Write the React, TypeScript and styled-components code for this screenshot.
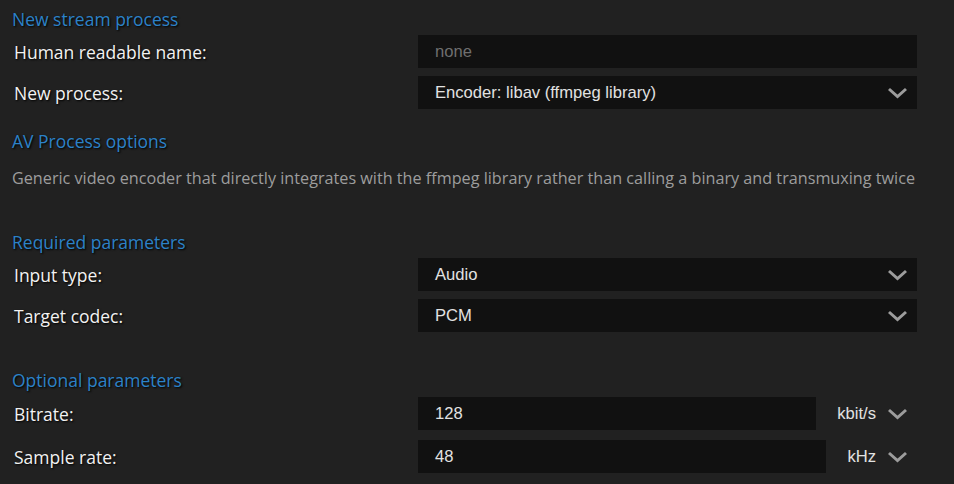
import styled, { createGlobalStyle } from 'styled-components';

const GlobalStyle = createGlobalStyle`
  html, body {
    margin: 0;
    padding: 0;
    background: #212121;
  }
`;

type FieldRow = {
  key: string
  label: string
  value: string
  placeholder?: boolean
  select?: boolean
  unit?: string
}

const general: FieldRow[] = [
  { key: 'name', label: 'Human readable name:', value: 'none', placeholder: true },
  { key: 'process', label: 'New process:', value: 'Encoder: libav (ffmpeg library)', select: true },
];

const required: FieldRow[] = [
  { key: 'input', label: 'Input type:', value: 'Audio', select: true },
  { key: 'codec', label: 'Target codec:', value: 'PCM', select: true },
];

const optional: FieldRow[] = [
  { key: 'bitrate', label: 'Bitrate:', value: '128', unit: 'kbit/s' },
  { key: 'samplerate', label: 'Sample rate:', value: '48', unit: 'kHz' },
];

function Chevron() {
  return (
    <ChevronSvg viewBox="0 0 21 12" width="21" height="12">
      <polyline points="2,2 10.5,9.5 19,2" fill="none" stroke="currentColor" strokeWidth="3" strokeLinejoin="miter" />
    </ChevronSvg>
  );
}

function Rows({ rows }: { rows: FieldRow[] }) {
  return (
    <>
      { rows.map(({ key, label, value, placeholder, select, unit }) => (
        <Row key={ key }>
          <Label>{ label }</Label>
          <Control>
            <Field placeholder={ placeholder }>
              <span>{ value }</span>
              { select && <Chevron /> }
            </Field>
            { unit && (
              <Unit>
                <span>{ unit }</span>
                <Chevron />
              </Unit>
            ) }
          </Control>
        </Row>
      )) }
    </>
  );
}

export default function App() {
  return (
    <Page>
      <GlobalStyle />
      <Heading>New stream process</Heading>
      <Rows rows={ general } />

      <Heading $gap={ 18 }>AV Process options</Heading>
      <Description>
        Generic video encoder that directly integrates with the ffmpeg library rather than calling a binary and transmuxing twice
      </Description>

      <Heading $gap={ 38 }>Required parameters</Heading>
      <Rows rows={ required } />

      <Heading $gap={ 34 }>Optional parameters</Heading>
      <Rows rows={ optional } />
    </Page>
  );
}

const Page = styled.main`
  box-sizing: border-box;
  width: 954px;
  min-height: 484px;
  padding: 5px 37px 0 12px;
  background: #212121;
  font-family: "Open Sans", "Noto Sans", sans-serif;
`;

const Heading = styled.h2<{ $gap?: number }>`
  margin: ${ ({ $gap }) => $gap ?? 0 }px 0 2px;
  font-size: 17.5px;
  font-weight: 400;
  line-height: 28px;
  color: #2c82c8;
  text-shadow: 1px 1px 2px #000;
`;

const Description = styled.p`
  margin: 11px 0 0;
  font-size: 16.2px;
  line-height: 24px;
  color: #9d9d9d;
  white-space: nowrap;
`;

const Row = styled.div`
  display: grid;
  grid-template-columns: 406px 1fr;
  align-items: center;
  min-height: 33px;
  margin-bottom: 8px;
`;

const Label = styled.label`
  padding-left: 2px;
  font-size: 17.5px;
  color: #f2f2f2;
  text-shadow: 1px 1px 2px #000;
`;

const Control = styled.div`
  display: flex;
  align-items: center;
`;

const Field = styled.div<{ placeholder?: boolean }>`
  flex: 1;
  display: flex;
  align-items: center;
  justify-content: space-between;
  height: 33px;
  padding: 0 9px 0 17px;
  background: #111111;
  font-family: "Liberation Sans", Arial, sans-serif;
  font-size: 16.6px;
  color: ${ ({ placeholder }) => placeholder ? '#6f6f6f' : '#e2e2e2' };
`;

const Unit = styled.div`
  display: flex;
  align-items: center;
  gap: 11px;
  height: 35px;
  padding: 0 9px 0 21px;
  font-family: "Liberation Sans", Arial, sans-serif;
  font-size: 16.6px;
  color: #e2e2e2;
`;

const ChevronSvg = styled.svg`
  display: block;
  color: #9c9c9c;
`;
